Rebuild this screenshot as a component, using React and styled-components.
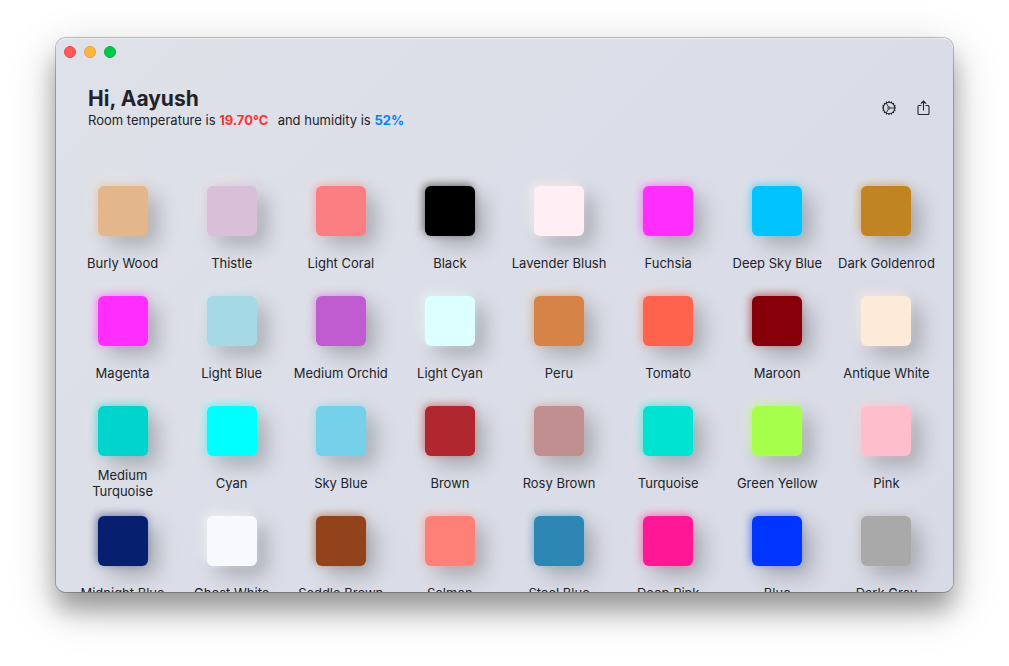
import React from "react";
import styled, { createGlobalStyle } from "styled-components";

const GlobalStyle = createGlobalStyle`
  * { box-sizing: border-box; }
  body {
    margin: 0;
    background: #ffffff;
    color: #222326;
    font-family: Inter, "Liberation Sans", sans-serif;
    font-size: 13px;
    line-height: 16px;
  }
`;

const Desktop = styled.div`
  display: flex;
  height: 100vh;
  padding: 38px 56px 74px;
  overflow: hidden;
`;

const Window = styled.main`
  flex: 1;
  min-width: 0;
  display: flex;
  flex-direction: column;
  overflow: hidden;
  border-radius: 10px;
  background: linear-gradient(135deg, #dfe1e9, #dbdee8 50%, #d8dbe6);
  box-shadow:
    inset 0 1px 0 rgba(255, 255, 255, 0.4),
    0 0 0 1px rgba(0, 0, 0, 0.24),
    0 18px 25px rgba(0, 0, 0, 0.3),
    0 14px 50px rgba(0, 0, 0, 0.2);
`;

const TitleBar = styled.div`
  display: flex;
  gap: 8px;
  padding: 8px;
`;

const TrafficLight = styled.button`
  width: 12px;
  height: 12px;
  padding: 0;
  border: 1px solid ${(p) => p.$edge};
  border-radius: 50%;
  background: ${(p) => p.$fill};
`;

const Header = styled.header`
  display: flex;
  align-items: flex-end;
  justify-content: space-between;
  padding: 20px 20px 0 32px;
`;

const Greeting = styled.h1`
  margin: 0;
  font-size: 21px;
  line-height: 26px;
  font-weight: 700;
`;

const Status = styled.p`
  margin: 0;
  white-space: pre;
`;

const Reading = styled.strong`
  margin-right: 2px;
  font-weight: 700;
  color: ${(p) => p.$color};
`;

const Actions = styled.div`
  display: flex;
  gap: 14px;
  padding-bottom: 10px;
`;

const IconButton = styled.button`
  display: flex;
  width: 20px;
  height: 20px;
  padding: 0;
  border: 0;
  background: none;
  color: #222326;
`;

const Palette = styled.ul`
  flex: 1;
  min-height: 0;
  display: grid;
  grid-template-columns: repeat(8, minmax(0, 1fr));
  align-content: start;
  row-gap: 17px;
  margin: 0;
  padding: 58px 12px 0;
  overflow: hidden;
  list-style: none;
`;

const SwatchItem = styled.li`
  display: flex;
  flex-direction: column;
  align-items: center;
  gap: 11px;
`;

const Swatch = styled.button`
  width: 50px;
  height: 50px;
  padding: 0;
  border: 0;
  border-radius: 6px;
  background: ${(p) => p.$color};
  box-shadow:
    -2px -2px 8px ${(p) => p.$color}80,
    -5px -5px 14px rgba(255, 248, 240, 0.3),
    10px 10px 20px rgba(0, 0, 0, 0.22);
`;

const SwatchLabel = styled.span`
  display: flex;
  align-items: center;
  height: 32px;
  padding: 0 4px;
  text-align: center;
`;

const colors = [
  ["Burly Wood", "#e3b68b"],
  ["Thistle", "#d9bfd7"],
  ["Light Coral", "#fb7f82"],
  ["Black", "#000000"],
  ["Lavender Blush", "#ffeff4"],
  ["Fuchsia", "#ff2eff"],
  ["Deep Sky Blue", "#00c3ff"],
  ["Dark Goldenrod", "#c08423"],
  ["Magenta", "#ff2eff"],
  ["Light Blue", "#a5d9e5"],
  ["Medium Orchid", "#c05bd0"],
  ["Light Cyan", "#dcffff"],
  ["Peru", "#d68347"],
  ["Tomato", "#ff624d"],
  ["Maroon", "#870009"],
  ["Antique White", "#fdead8"],
  ["Medium Turquoise", "#00d4cd"],
  ["Cyan", "#00ffff"],
  ["Sky Blue", "#75d0ea"],
  ["Brown", "#b0272f"],
  ["Rosy Brown", "#c28f90"],
  ["Turquoise", "#00e3d2"],
  ["Green Yellow", "#a6ff4b"],
  ["Pink", "#ffbecb"],
  ["Midnight Blue", "#06206f"],
  ["Ghost White", "#f8f8ff"],
  ["Saddle Brown", "#92431c"],
  ["Salmon", "#ff8077"],
  ["Steel Blue", "#2e86b5"],
  ["Deep Pink", "#ff1796"],
  ["Blue", "#0034ff"],
  ["Dark Gray", "#a9a9a9"],
];

const teeth = Array.from({ length: 16 }, (_, i) => i * 22.5);

function GearIcon() {
  return (
    <svg width="20" height="20" viewBox="0 0 20 20" fill="none" stroke="currentColor" aria-hidden="true">
      <circle cx="10" cy="10" r="5.7" strokeWidth="1.1" />
      {teeth.map((angle) => (
        <path key={angle} d="M10 4.3V3" strokeWidth="1.2" transform={`rotate(${angle} 10 10)`} />
      ))}
      <circle cx="10" cy="10" r="1.2" strokeWidth="0.9" />
      <path d="M11.2 10h4.3M9.4 8.9L7.2 5.1M9.4 11.1l-2.2 3.8" strokeWidth="0.9" />
    </svg>
  );
}

function ShareIcon() {
  return (
    <svg width="20" height="20" viewBox="0 0 20 20" fill="none" stroke="currentColor" strokeWidth="1.1" strokeLinecap="round" strokeLinejoin="round" aria-hidden="true">
      <path d="M8 7.5H6Q5 7.5 5 8.5v7Q5 16.5 6 16.5h9Q16 16.5 16 15.5v-7Q16 7.5 15 7.5h-2" />
      <path d="M10.5 12V3.2M8.2 5.3l2.3-2.3 2.3 2.3" />
    </svg>
  );
}

export default function App() {
  return (
    <>
      <GlobalStyle />
      <Desktop>
        <Window>
          <TitleBar>
            <TrafficLight aria-label="Close" $fill="#ff5a5a" $edge="#ee4548" />
            <TrafficLight aria-label="Minimize" $fill="#ffb641" $edge="#e9a137" />
            <TrafficLight aria-label="Zoom" $fill="#00c947" $edge="#00b53d" />
          </TitleBar>
          <Header>
            <div>
              <Greeting>Hi, Aayush</Greeting>
              <Status>
                Room temperature is <Reading $color="#ff3136">19.70°C</Reading>
                {"  and humidity is "}
                <Reading $color="#0083ff">52%</Reading>
              </Status>
            </div>
            <Actions>
              <IconButton aria-label="Settings"><GearIcon /></IconButton>
              <IconButton aria-label="Share"><ShareIcon /></IconButton>
            </Actions>
          </Header>
          <Palette>
            {colors.map(([name, color]) => (
              <SwatchItem key={name}>
                <Swatch $color={color} aria-label={name} />
                <SwatchLabel>{name}</SwatchLabel>
              </SwatchItem>
            ))}
          </Palette>
        </Window>
      </Desktop>
    </>
  );
}
